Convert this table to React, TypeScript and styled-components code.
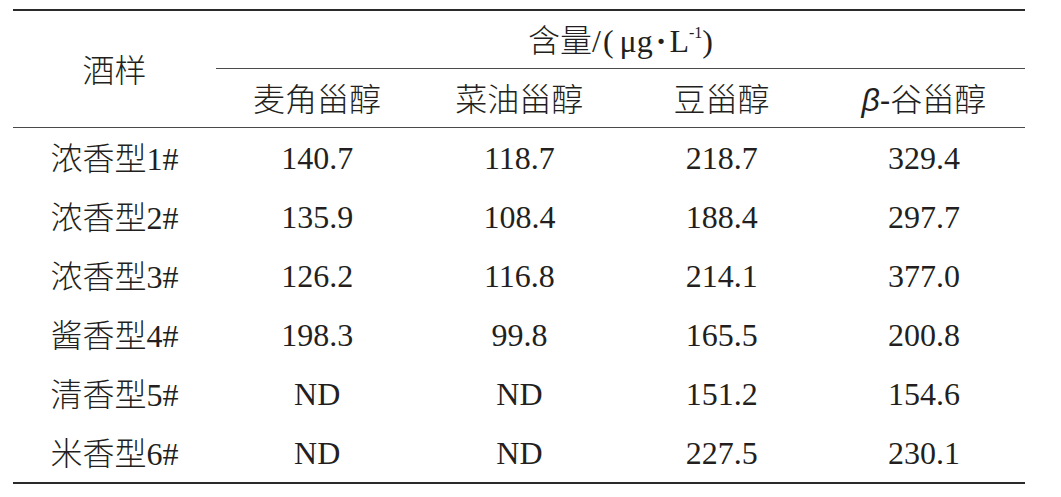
import React from "react";
import styled, { createGlobalStyle } from "styled-components";

const GlobalStyle = createGlobalStyle`
  body {
    margin: 0;
    background: #ffffff;
  }
`;

const Page = styled.div`
  padding: 9px 0 0 13px;
`;

const Table = styled.table`
  width: 1012px;
  table-layout: fixed;
  border-collapse: collapse;
  border-top: 2px solid #2a2a2a;
  border-bottom: 2px solid #2a2a2a;
  color: #231f20;
  font-family: "Liberation Serif", "Noto Sans CJK SC", serif;
  font-size: 32px;
`;

const Cell = styled.td<{ $line?: boolean; $h?: number }>`
  padding: 0;
  text-align: center;
  vertical-align: middle;
  height: ${(p) => p.$h ?? 59}px;
  line-height: 1;
  border-bottom: ${(p) => (p.$line ? "1px solid #4a4a4a" : "none")};
`;

const Cjk = styled.span`
  font-family: "Noto Sans CJK SC", sans-serif;
  font-weight: 300;
`;

const Paren = styled.span`
  display: inline-block;
  margin: 0 6px 0 2px;
`;

const Dot = styled.span`
  display: inline-block;
  margin: 0 3px;
  font-weight: bold;
`;

const Beta = styled.span`
  font-family: "Liberation Sans", sans-serif;
  font-style: italic;
`;

const Dash = styled.span`
  font-family: "Liberation Sans", sans-serif;
`;

const Sup = styled.sup`
  font-size: 16px;
  vertical-align: 14px;
  line-height: 0;
`;

const HeaderCell = styled(Cell).attrs({ as: "th" })`
  font-weight: normal;
`;

const rows = [
  ["浓香型", "1#", "140.7", "118.7", "218.7", "329.4"],
  ["浓香型", "2#", "135.9", "108.4", "188.4", "297.7"],
  ["浓香型", "3#", "126.2", "116.8", "214.1", "377.0"],
  ["酱香型", "4#", "198.3", "99.8", "165.5", "200.8"],
  ["清香型", "5#", "ND", "ND", "151.2", "154.6"],
  ["米香型", "6#", "ND", "ND", "227.5", "230.1"],
];

export default function App() {
  return (
    <>
      <GlobalStyle />
      <Page>
        <Table>
          <colgroup>
            <col style={{ width: 203 }} />
            <col />
            <col />
            <col />
            <col />
          </colgroup>
          <thead>
            <tr>
              <HeaderCell rowSpan={2} $line>
                <Cjk>酒样</Cjk>
              </HeaderCell>
              <HeaderCell colSpan={4} $line $h={57}>
                <Cjk>含量</Cjk>/<Paren>(</Paren>μg<Dot>·</Dot>L<Sup>-1</Sup>)
              </HeaderCell>
            </tr>
            <tr>
              <HeaderCell $line $h={58}>
                <Cjk>麦角甾醇</Cjk>
              </HeaderCell>
              <HeaderCell $line $h={58}>
                <Cjk>菜油甾醇</Cjk>
              </HeaderCell>
              <HeaderCell $line $h={58}>
                <Cjk>豆甾醇</Cjk>
              </HeaderCell>
              <HeaderCell $line $h={58}>
                <Beta>β</Beta>
                <Dash>-</Dash>
                <Cjk>谷甾醇</Cjk>
              </HeaderCell>
            </tr>
          </thead>
          <tbody>
            {rows.map((r) => (
              <tr key={r[1]}>
                <Cell>
                  <Cjk>{r[0]}</Cjk>
                  {r[1]}
                </Cell>
                {r.slice(2).map((v, i) => (
                  <Cell key={i}>{v}</Cell>
                ))}
              </tr>
            ))}
          </tbody>
        </Table>
      </Page>
    </>
  );
}
